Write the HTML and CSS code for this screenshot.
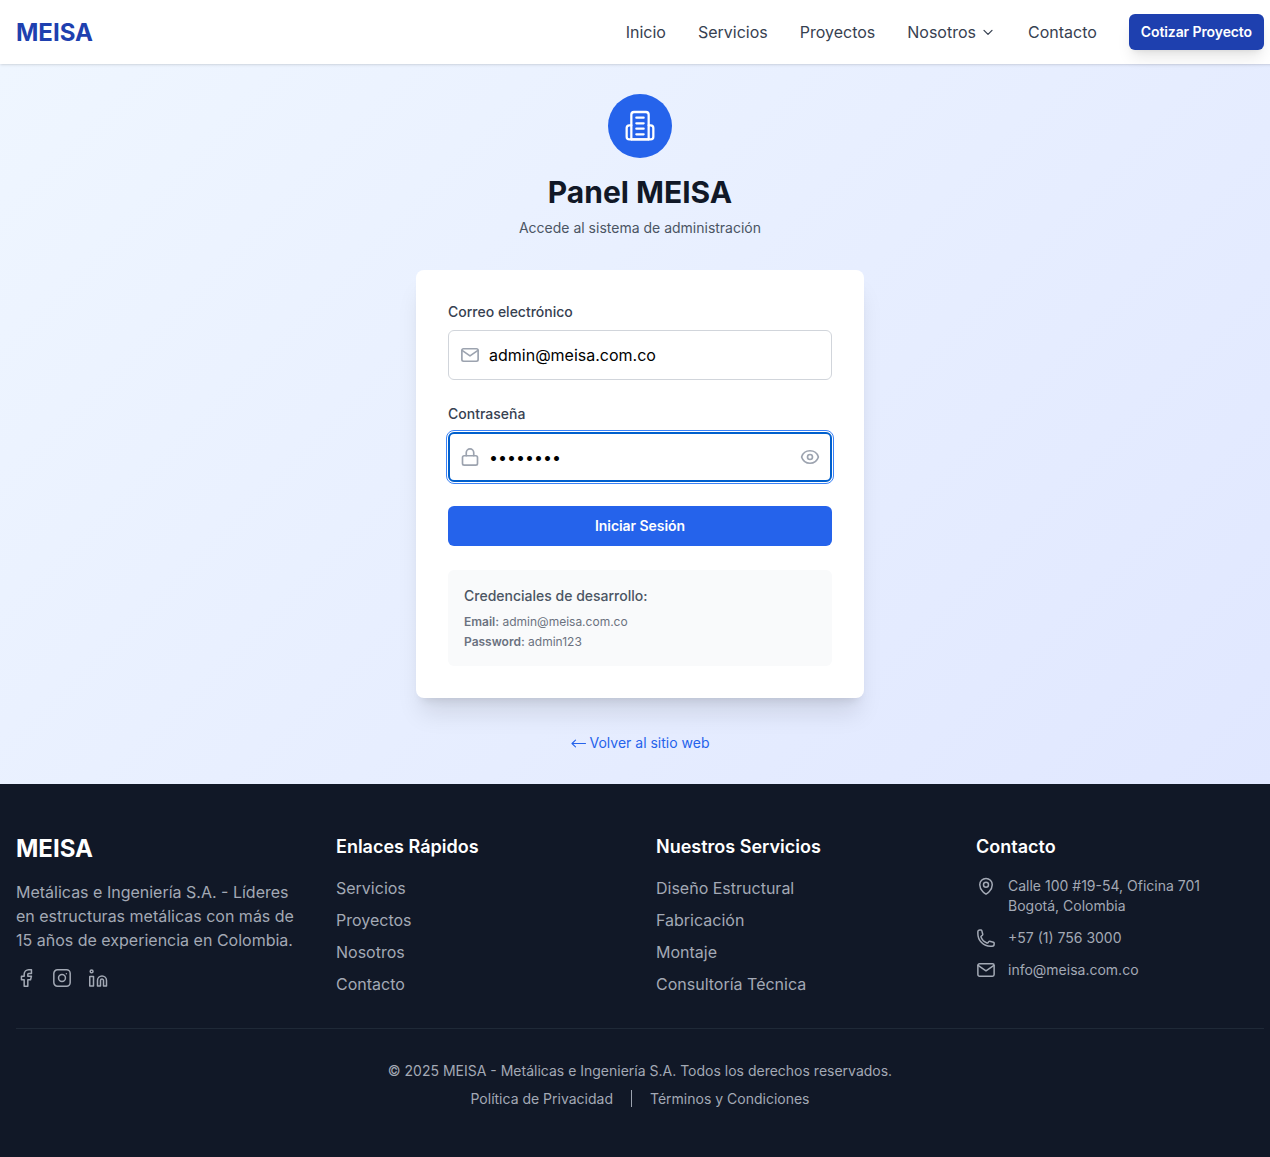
FILE: index.html
```html
<!DOCTYPE html>
<html lang="es">

<head>
    <meta charset="UTF-8">
    <meta name="viewport" content="width=device-width, initial-scale=1.0">
    <title>Panel MEISA</title>
    <link rel="stylesheet" href="styles.css">
</head>

<body>

    <header class="topbar">
        <a class="logo" href="#">MEISA</a>
        <nav class="menu">
            <a href="#">Inicio</a>
            <a href="#">Servicios</a>
            <a href="#">Proyectos</a>
            <a class="menu-drop" href="#">Nosotros
                <svg width="16" height="16" viewBox="0 0 24 24" fill="none" stroke="currentColor" stroke-width="1.900" stroke-linecap="round" stroke-linejoin="round"><path d="m6 9.500 6 6 6-6" /></svg>
            </a>
            <a href="#">Contacto</a>
            <a class="btn-cotizar" href="#">Cotizar Proyecto</a>
        </nav>
    </header>

    <main class="login">
        <div class="login-icon">
            <svg width="32" height="32" viewBox="0 0 24 24" fill="none" stroke="currentColor" stroke-width="1.700" stroke-linecap="round" stroke-linejoin="round">
                <path d="M5.500 22V3.500a2 2 0 0 1 2-2h9a2 2 0 0 1 2 2V22" />
                <path d="M5.500 11.500H4a2 2 0 0 0-2 2V20a2 2 0 0 0 2 2h16a2 2 0 0 0 2-2v-6.500a2 2 0 0 0-2-2h-1.500" />
                <path d="M5.500 22h13M9.250 5.750h5.500M9.250 10h5.500M9.250 14h5.500M9.250 18.250h5.500" />
            </svg>
        </div>
        <h1>Panel MEISA</h1>
        <p class="login-sub">Accede al sistema de administración</p>

        <form class="card">
            <label for="email">Correo electrónico</label>
            <div class="field">
                <svg class="field-icon" width="20" height="20" viewBox="0 0 24 24" fill="none" stroke="currentColor" stroke-width="2" stroke-linecap="round" stroke-linejoin="round">
                    <rect x="2.250" y="4.500" width="19.500" height="15" rx="2" />
                    <path d="m2.500 6.500 9.500 6.500 9.500-6.500" />
                </svg>
                <input id="email" type="email" value="admin@meisa.com.co">
            </div>

            <label for="password">Contraseña</label>
            <div class="field">
                <svg class="field-icon" width="20" height="20" viewBox="0 0 24 24" fill="none" stroke="currentColor" stroke-width="2" stroke-linecap="round" stroke-linejoin="round">
                    <rect x="3" y="10.500" width="18" height="11.250" rx="2" />
                    <path d="M7.500 10.500V6.750a4.500 4.500 0 0 1 9 0v3.750" />
                </svg>
                <input class="input-focus" id="password" type="password" value="admin123">
                <svg class="field-eye" width="20" height="20" viewBox="0 0 24 24" fill="none" stroke="currentColor" stroke-width="2" stroke-linecap="round" stroke-linejoin="round">
                    <path d="M2.040 12.320a1 1 0 0 1 0-.640C3.420 7.510 7.360 4.500 12 4.500c4.640 0 8.570 3 9.960 7.180a1 1 0 0 1 0 .640C20.580 16.490 16.640 19.500 12 19.500c-4.640 0-8.570-3-9.960-7.180Z" />
                    <circle cx="12" cy="12" r="3" />
                </svg>
            </div>

            <button class="btn-login" type="button">Iniciar Sesión</button>

            <div class="dev-box">
                <h3>Credenciales de desarrollo:</h3>
                <p><b>Email:</b> admin@meisa.com.co</p>
                <p><b>Password:</b> admin123</p>
            </div>
        </form>

        <a class="back-link" href="#">
            <svg width="15" height="10" viewBox="0 0 15 10" fill="none" stroke="currentColor" stroke-width="1.100" stroke-linecap="round" stroke-linejoin="round"><path d="M1 5.500h13.500M4.500 2.200 1 5.500l3.500 3.300" /></svg>
            Volver al sitio web
        </a>
    </main>

    <footer class="footer">
        <div class="footer-cols">
            <div>
                <div class="footer-logo">MEISA</div>
                <p class="footer-about">Metálicas e Ingeniería S.A. - Líderes en estructuras metálicas con más de 15 años de experiencia en Colombia.</p>
                <div class="social">
                    <svg width="20" height="20" viewBox="1 1 22 22" fill="none" stroke="currentColor" stroke-width="1.650" stroke-linecap="round" stroke-linejoin="round"><path d="M7 10v4h3v7h4v-7h3l1-4h-4V8a1 1 0 0 1 1-1h3V3h-3a5 5 0 0 0-5 5v2H7" /></svg>
                    <svg width="20" height="20" viewBox="1 1 22 22" fill="none" stroke="currentColor" stroke-width="1.650" stroke-linecap="round" stroke-linejoin="round"><rect x="3" y="3" width="18" height="18" rx="4" /><circle cx="12" cy="12" r="3.800" /><path d="M16.800 7.200v.010" /></svg>
                    <svg width="20" height="20" viewBox="0 0 20 20" fill="none" stroke="currentColor" stroke-width="1.500" stroke-linecap="round" stroke-linejoin="round"><path d="M1.750 8.500h3.750V18H1.750Z" /><circle cx="3.600" cy="3.400" r="1.400" /><path d="M9.500 18V12.500a4.500 4.500 0 0 1 9 0V18h-3v-5.500a1.500 1.500 0 0 0-3 0V18Z" /></svg>
                </div>
            </div>
            <div>
                <h4>Enlaces Rápidos</h4>
                <ul class="footer-links">
                    <li>Servicios</li>
                    <li>Proyectos</li>
                    <li>Nosotros</li>
                    <li>Contacto</li>
                </ul>
            </div>
            <div>
                <h4>Nuestros Servicios</h4>
                <ul class="footer-links">
                    <li>Diseño Estructural</li>
                    <li>Fabricación</li>
                    <li>Montaje</li>
                    <li>Consultoría Técnica</li>
                </ul>
            </div>
            <div>
                <h4>Contacto</h4>
                <ul class="footer-contact">
                    <li>
                        <svg width="20" height="20" viewBox="0 0 24 24" fill="none" stroke="currentColor" stroke-width="1.800" stroke-linecap="round" stroke-linejoin="round"><circle cx="12" cy="10.500" r="3" /><path d="M19.500 10.500c0 7.100-7.500 11.250-7.500 11.250S4.500 17.600 4.500 10.500a7.500 7.500 0 0 1 15 0Z" /></svg>
                        <span>Calle 100 #19-54, Oficina 701<br>Bogotá, Colombia</span>
                    </li>
                    <li>
                        <svg width="20" height="20" viewBox="0 0 24 24" fill="none" stroke="currentColor" stroke-width="1.800" stroke-linecap="round" stroke-linejoin="round"><path d="M2.250 6.750c0 8.280 6.720 15 15 15h2.250a2.250 2.250 0 0 0 2.250-2.250v-1.370c0-.52-.35-.97-.85-1.090l-4.420-1.110c-.44-.11-.9.060-1.170.42l-.97 1.290c-.28.380-.77.540-1.210.380a12.040 12.040 0 0 1-7.140-7.140c-.16-.44 0-.93.380-1.210l1.290-.97c.37-.27.530-.73.420-1.170L6.960 3.100a1.130 1.130 0 0 0-1.090-.85H4.500A2.250 2.250 0 0 0 2.250 4.500v2.250Z" /></svg>
                        <span>+57 (1) 756 3000</span>
                    </li>
                    <li>
                        <svg width="20" height="20" viewBox="0 0 24 24" fill="none" stroke="currentColor" stroke-width="1.800" stroke-linecap="round" stroke-linejoin="round"><rect x="2.250" y="4.500" width="19.500" height="15" rx="2" /><path d="m2.500 6.500 9.500 6.500 9.500-6.500" /></svg>
                        <span>info@meisa.com.co</span>
                    </li>
                </ul>
            </div>
        </div>

        <div class="footer-bottom">
            <p>© 2025 MEISA - Metálicas e Ingeniería S.A. Todos los derechos reservados.</p>
            <div class="footer-legal">
                <a href="#">Política de Privacidad</a>
                <span class="legal-sep"></span>
                <a href="#">Términos y Condiciones</a>
            </div>
        </div>
    </footer>

</body>

</html>
```

FILE: styles.css
```css
* {
    box-sizing: border-box;
}

html {
    overflow-x: hidden;
}

body {
    margin: 0;
    width: 1280px;
    font-family: Inter, "Liberation Sans", sans-serif;
    line-height: 24px;
    color: #111827;
}

a {
    color: inherit;
    text-decoration: none;
}

/* header */
.topbar {
    position: relative;
    height: 64px;
    padding: 0 16px;
    background-color: #fff;
    display: flex;
    justify-content: space-between;
    align-items: center;
    box-shadow: 0 1px 3px rgba(0, 0, 0, 0.1), 0 1px 2px -1px rgba(0, 0, 0, 0.1);
}

.logo {
    padding-top: 2px;
    font-size: 24px;
    font-weight: 700;
    color: #1e40af;
}

.menu {
    display: flex;
    align-items: center;
    gap: 32px;
    font-weight: 400;
    color: #374151;
}

.menu-drop {
    display: flex;
    align-items: center;
    gap: 4px;
}

.btn-cotizar {
    padding: 8px 12px;
    border-radius: 6px;
    background-color: #1e40af;
    color: #fff;
    font-size: 14px;
    font-weight: 600;
    line-height: 20px;
    letter-spacing: -0.1px;
    box-shadow: 0 10px 15px -3px rgba(0, 0, 0, 0.1), 0 4px 6px -4px rgba(0, 0, 0, 0.1);
}

/* login */
.login {
    height: 720px;
    padding-top: 30px;
    background: linear-gradient(135deg, #eff6ff, #e0e7ff);
    display: flex;
    flex-direction: column;
    align-items: center;
}

.login-icon {
    width: 64px;
    height: 64px;
    border-radius: 50%;
    background-color: #2563eb;
    color: #fff;
    display: flex;
    justify-content: center;
    align-items: center;
}

.login h1 {
    margin: 16px 0 0;
    font-size: 30px;
    line-height: 36px;
    font-weight: 700;
}

.login-sub {
    margin: 8px 0 0;
    font-size: 14px;
    line-height: 20px;
    color: #4b5563;
}

.card {
    width: 448px;
    margin-top: 32px;
    padding: 32px;
    background-color: #fff;
    border-radius: 8px;
    box-shadow: 0 20px 25px -5px rgba(0, 0, 0, 0.1), 0 8px 10px -6px rgba(0, 0, 0, 0.1);
}

.card label {
    display: block;
    margin-bottom: 8px;
    font-size: 14px;
    line-height: 20px;
    font-weight: 500;
    color: #374151;
}

.field {
    position: relative;
    margin-bottom: 24px;
}

.field input {
    display: block;
    width: 100%;
    height: 50px;
    padding: 0 40px;
    border: 1px solid #d1d5db;
    border-radius: 6px;
    background-color: #fff;
    font-family: inherit;
    font-size: 16px;
    color: #000;
    outline: none;
}

.field .input-focus {
    border: 2px solid #005fcc;
    padding: 0 39px;
    outline: 1px solid #3b82f6;
    outline-offset: 1px;
}

.field-icon,
.field-eye {
    position: absolute;
    top: 15px;
    color: #9ca3af;
}

.field-icon {
    left: 12px;
}

.field-eye {
    right: 12px;
}

.btn-login {
    display: block;
    width: 100%;
    height: 40px;
    padding: 0 0 2px;
    border: none;
    border-radius: 6px;
    background-color: #2563eb;
    color: #fff;
    font-family: inherit;
    font-size: 14px;
    font-weight: 600;
    letter-spacing: -0.07px;
}

.dev-box {
    margin-top: 24px;
    padding: 16px;
    border-radius: 6px;
    background-color: #f9fafb;
}

.dev-box h3 {
    margin: 0 0 8px;
    font-size: 14px;
    line-height: 20px;
    font-weight: 500;
    color: #4b5563;
}

.dev-box p {
    margin: 4px 0 0;
    font-size: 12px;
    line-height: 16px;
    color: #6b7280;
}

.dev-box h3 + p {
    margin-top: 0;
}

.dev-box b {
    font-weight: 600;
}

.back-link {
    margin-top: 33px;
    display: flex;
    align-items: center;
    gap: 4px;
    font-size: 14px;
    line-height: 24px;
    color: #2563eb;
}

/* footer */
.footer {
    height: 373px;
    padding: 48px 16px 0;
    background-color: #111827;
    color: #a3a9b5;
}

.footer-cols {
    display: grid;
    grid-template-columns: repeat(4, 1fr);
    gap: 32px;
}

.footer-logo {
    padding-top: 1px;
    height: 32px;
    font-size: 24px;
    line-height: 32px;
    font-weight: 700;
    color: #fff;
}

.footer-about {
    margin: 16px 0;
}

.social {
    display: flex;
    gap: 16px;
}

.footer h4 {
    margin: 0 0 16px;
    padding-top: 1px;
    height: 28px;
    font-size: 18px;
    line-height: 28px;
    font-weight: 600;
    color: #fff;
}

.footer-links,
.footer-contact {
    margin: 0;
    padding: 0;
    list-style: none;
}

.footer-links li {
    margin-bottom: 8px;
}

.footer-links li:last-child {
    margin-bottom: 0;
}

.footer-contact {
    font-size: 14px;
    line-height: 20px;
}

.footer-contact li {
    display: flex;
    gap: 12px;
    margin-bottom: 12px;
}

.footer-contact svg {
    flex-shrink: 0;
}

.footer-bottom {
    margin-top: 32px;
    padding-top: 32px;
    border-top: 1px solid #1f2937;
    font-size: 14px;
    line-height: 20px;
    text-align: center;
}

.footer-bottom p {
    margin: 0;
}

.footer-legal {
    margin-top: 8px;
    display: flex;
    justify-content: center;
    gap: 18px;
}

.legal-sep {
    width: 1px;
    height: 17px;
    margin-top: 1px;
    background-color: #9ca3af;
}
```
